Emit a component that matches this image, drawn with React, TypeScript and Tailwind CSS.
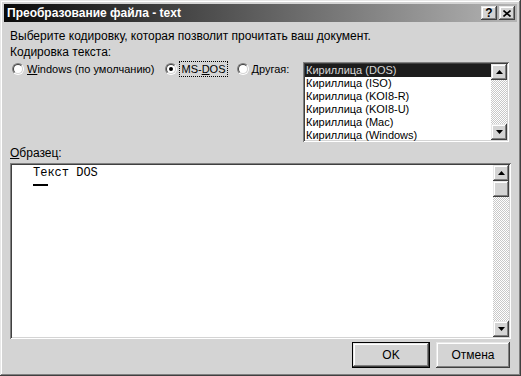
const encodings = [
  "Кириллица (DOS)",
  "Кириллица (ISO)",
  "Кириллица (KOI8-R)",
  "Кириллица (KOI8-U)",
  "Кириллица (Mac)",
  "Кириллица (Windows)",
];

const raised =
  "shadow-[inset_-1px_-1px_#404040,inset_1px_1px_#e8e8e8,inset_-2px_-2px_#808080,inset_2px_2px_#ffffff]";
const sunken =
  "shadow-[inset_1px_1px_#808080,inset_-1px_-1px_#ffffff,inset_2px_2px_#404040,inset_-2px_-2px_#d4d4d4]";
const dither =
  "bg-[repeating-conic-gradient(#ffffff_0_25%,#c8c8c8_0_50%)] bg-[length:2px_2px]";

function Arrow({ up }: { up?: boolean }) {
  return (
    <div className={`w-[16px] h-[16px] bg-[#d4d4d4] ${raised} flex items-center justify-center shrink-0`}>
      <svg width="7" height="4" viewBox="0 0 7 4">
        <path d={up ? "M3.5 0 L7 4 L0 4 Z" : "M0 0 L7 0 L3.5 4 Z"} fill="#000" />
      </svg>
    </div>
  );
}

function Radio({ checked }: { checked?: boolean }) {
  return (
    <div className="w-[12px] h-[12px] rounded-full border border-t-[#808080] border-l-[#808080] border-b-white border-r-white shrink-0">
      <div className="w-full h-full rounded-full border border-t-[#404040] border-l-[#404040] border-b-[#d4d4d4] border-r-[#d4d4d4] bg-white flex items-center justify-center">
        {checked && <div className="w-[4px] h-[4px] rounded-full bg-black" />}
      </div>
    </div>
  );
}

export default function App() {
  return (
    <div
      className={`w-[521px] h-[376px] bg-[#d4d4d4] ${raised} p-[4px] flex flex-col text-[12px] text-black overflow-hidden`}
      style={{ fontFamily: '"Liberation Sans", Arial, sans-serif' }}
    >
      {/* title bar */}
      <div className="h-[18px] bg-[linear-gradient(90deg,#0a0a0a,#b4b4b4)] flex items-center pl-[3px] pr-[2px] shrink-0">
        <span className="text-white font-bold text-[12px] flex-1 leading-none">Преобразование файла - text</span>
        <div className={`w-[16px] h-[14px] bg-[#d4d4d4] ${raised} flex items-center justify-center font-bold text-[12px] leading-none`}>?</div>
        <div className={`w-[16px] h-[14px] bg-[#d4d4d4] ${raised} flex items-center justify-center ml-[2px]`}>
          <svg width="8" height="7" viewBox="0 0 8 7">
            <path d="M0.5 0.5 L7.5 6.5 M7.5 0.5 L0.5 6.5" stroke="#000" strokeWidth="1.6" />
          </svg>
        </div>
      </div>

      <div className="flex-1 flex flex-col px-[6px]">
        <p className="mt-[6px] leading-[16px]">Выберите кодировку, которая позволит прочитать ваш документ.</p>
        <p className="leading-[16px]">Кодировка текста:</p>

        <div className="flex items-start whitespace-nowrap">
          <div className="flex items-start text-[11px] min-w-0">
            <div className="flex items-center h-[16px] gap-[3px] pl-[2px] mt-[1px] shrink-0">
              <Radio />
              <span><u>W</u>indows (по умолчанию)</span>
            </div>
            <div className="flex items-center h-[16px] gap-[2px] ml-[11px] mt-[1px] shrink-0">
              <Radio checked />
              <span className="border border-dotted border-black px-[1px] leading-[14px]">MS-<u>D</u>OS</span>
            </div>
            <div className="flex items-center h-[16px] gap-[3px] ml-[9px] mt-[1px] shrink-0">
              <Radio />
              <span><u>Д</u>ругая:</span>
            </div>
          </div>

          {/* encodings list */}
          <div className={`ml-auto mr-[2px] mt-[2px] w-[206px] h-[80px] bg-white ${sunken} p-[2px] flex shrink-0`}>
            <div className="flex-1 flex flex-col text-[11px]">
              {encodings.map((e, i) => (
                <div
                  key={e}
                  className={`h-[13px] leading-[13px] pl-[1px] ${i === 0 ? "bg-[#1c1c1c] text-[#d8d8d8]" : ""}`}
                >
                  {e}
                </div>
              ))}
            </div>
            <div className="w-[16px] flex flex-col">
              <Arrow up />
              <div className={`flex-1 ${dither}`} />
              <Arrow />
            </div>
          </div>
        </div>

        <p className="mt-[3px] leading-[16px]">
          <u>О</u>бразец:
        </p>

        {/* preview */}
        <div className={`mt-[2px] h-[176px] bg-white ${sunken} p-[2px] flex`}>
          <div className="flex-1 pl-[21px] pt-[1px]" style={{ fontFamily: '"Liberation Mono", "Courier New", monospace' }}>
            <div className="text-[12px] leading-[14px]">Текст DOS</div>
            <div className="w-[15px] h-[2px] bg-black mt-[4px]" />
          </div>
          <div className="w-[16px] flex flex-col">
            <Arrow up />
            <div className={`w-[16px] h-[16px] bg-[#d4d4d4] ${raised}`} />
            <div className={`flex-1 ${dither}`} />
            <Arrow />
          </div>
        </div>

        <div className="flex justify-end gap-[6px] mt-[3px] mr-[1px]">
          <div className="w-[78px] h-[26px] border border-black">
            <div className={`w-full h-full bg-[#d4d4d4] ${raised} flex items-center justify-center`}>OK</div>
          </div>
          <div className={`w-[74px] h-[26px] bg-[#d4d4d4] ${raised} flex items-center justify-center`}>Отмена</div>
        </div>
      </div>
    </div>
  );
}
